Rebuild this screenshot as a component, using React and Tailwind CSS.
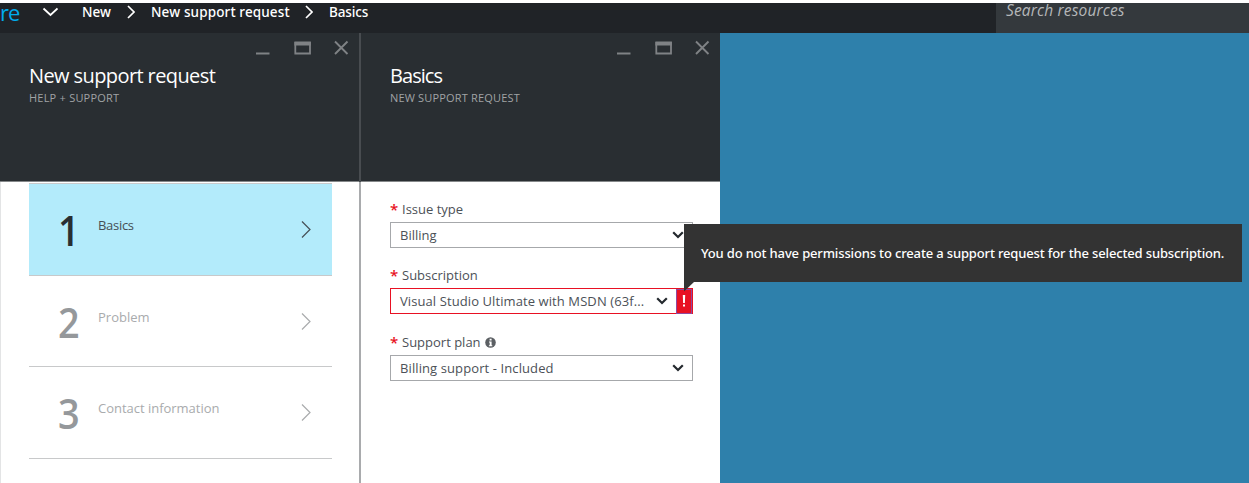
const crumbs = [
  { label: 'New', cls: 'w-[30px] tracking-[0px]' },
  { label: 'New support request', cls: 'w-[139px] tracking-[0.13px]' },
  { label: 'Basics', cls: 'w-10 tracking-[-0.15px]' },
];

const steps = [
  { n: '1', label: 'Basics', active: true, row: 'h-[93px]', spacing: 'tracking-[-0.3px]' },
  { n: '2', label: 'Problem', row: 'h-[91px]', spacing: 'tracking-[0px]' },
  { n: '3', label: 'Contact information', row: 'h-[92px]', spacing: 'tracking-[-0.02px]' },
];

function WindowControls() {
  return (
    <svg className="absolute top-[7px] right-[9px]" width="95" height="16" viewBox="0 0 95 16" fill="none" stroke="#7f8285">
      <path d="M1 13.500h13.500" strokeWidth="2" />
      <path d="M40.300 13.500V3h14.700v10.500z" strokeWidth="1.800" />
      <path d="M39.400 3.500h16.500" strokeWidth="4" />
      <path d="M80 1.500l12.500 12.500M92.500 1.500L80 14" strokeWidth="1.900" />
    </svg>
  );
}

function BladeHeader({ title, subtitle, titleCls, subCls }) {
  return (
    <div className="relative h-[149px] shrink-0 border-b border-[#85888a] bg-[#292e32] pt-[29px] pl-[29px] whitespace-nowrap">
      <WindowControls />
      <h2 className={`text-[20px] leading-7 text-white ${titleCls}`}>{title}</h2>
      <p className={`text-[11px] leading-[15px] text-[#a0a3a5] ${subCls}`}>{subtitle}</p>
    </div>
  );
}

function Required({ children, cls }) {
  return (
    <div className="flex h-5 items-center text-[13px] leading-5 text-[#4c5157]">
      <span className="w-3 text-[15px] font-semibold text-[#e81123]">*</span>
      <span className={`whitespace-nowrap ${cls}`}>{children}</span>
    </div>
  );
}

function Caret() {
  return (
    <svg width="12" height="8" viewBox="0 0 12 8" fill="none" stroke="#24292e" strokeWidth="2.200">
      <path d="M1.200 1.200L6 6l4.800-4.800" />
    </svg>
  );
}

function Select({ value, cls, invalid }) {
  return (
    <div className={`flex h-[26px] items-center border text-[13px] text-[#4c5157] ${invalid ? 'border-[#e81123]' : 'border-[#a6a8ab] pr-2'}`}>
      <span className={`ml-[9px] grow leading-5 whitespace-nowrap ${cls}`}>{value}</span>
      <Caret />
      {invalid && (
        <span className="ml-2 flex h-[25px] w-4 items-center justify-center border border-[#8f4aa0] bg-[#e81123]">
          <svg width="4" height="12" viewBox="0 0 4 12" fill="#fff">
            <path d="M.8 0h2.400L2.900 8H1.100zM1 9.500h2V11.500H1z" />
          </svg>
        </span>
      )}
    </div>
  );
}

export default function App() {
  return (
    <div className="relative flex h-[483px] w-[1249px] flex-col overflow-hidden bg-white pt-[3px] font-['Open_Sans','Noto_Sans',sans-serif]">
      <header className="flex h-[30px] shrink-0 justify-between bg-[#202327]">
        <div className="flex h-[18px] items-center text-[14px] font-medium text-white">
          <span className="w-[42px] text-[22px] leading-[18px] font-normal tracking-[-0.9px] text-[#00abec]">re</span>
          <svg width="16" height="10" viewBox="0 0 16 10" fill="none" stroke="#fff" strokeWidth="1.800">
            <path d="M1.500 1.500L8.500 8l7-6.500" />
          </svg>
          <nav className="ml-6 flex items-center font-['Noto_Sans',sans-serif] text-[13.500px]">
            {crumbs.map((c, i) => (
              <span key={c.label} className="flex items-center">
                {i > 0 && (
                  <svg className="mr-4 ml-[15px]" width="8" height="14" viewBox="0 0 8 14" fill="none" stroke="#fff" strokeWidth="1.700">
                    <path d="M1 1l6 6-6 6" />
                  </svg>
                )}
                <span className={`-mt-px leading-[18px] whitespace-nowrap ${c.cls}`}>{c.label}</span>
              </span>
            ))}
          </nav>
        </div>
        <div className="w-[253px] bg-[#34393d] pl-[10px] text-[15.500px] leading-[14px] tracking-[0.16px] text-[#b4b7b9] italic">
          Search resources
        </div>
      </header>

      <main className="flex grow bg-[#2e80ab]">
        <section className="flex w-[359px] flex-col bg-white">
          <BladeHeader title="New support request" subtitle="HELP + SUPPORT" titleCls="tracking-[-0.6px]" subCls="tracking-[0.22px]" />
          <div className="grow border-l border-[#e3e4e5] pt-px pr-[27px] pl-7">
            {steps.map((s) => (
              <div
                key={s.n}
                className={`flex border-b border-[#c8c9ca] ${s.row} ${s.active ? 'border-t bg-[#b3ebfb] text-[#454f55]' : 'text-[#a9abad]'}`}
              >
                <span className={`w-[69px] pt-[18px] pl-[29px] text-[42px] leading-[56px] font-semibold ${s.active ? 'text-[#292e32]' : 'text-[#95989b]'}`}>
                  <span className="inline-block origin-left scale-x-90">{s.n}</span>
                </span>
                <span className={`grow pt-[31px] text-[13px] leading-5 whitespace-nowrap ${s.spacing}`}>{s.label}</span>
                <svg className="mt-[37px] mr-[21px]" width="10" height="17" viewBox="0 0 10 17" fill="none" stroke="currentColor" strokeWidth="1.200">
                  <path d="M1 .5l8 8-8 8" />
                </svg>
              </div>
            ))}
          </div>
        </section>

        <div className="flex w-0.5 flex-col">
          <div className="h-[149px] bg-[#484c50]" />
          <div className="grow bg-[#a9abad]" />
        </div>

        <section className="flex w-[359px] flex-col bg-white">
          <BladeHeader title="Basics" subtitle="NEW SUPPORT REQUEST" titleCls="tracking-[-0.95px]" subCls="tracking-[0.17px]" />
          <div className="flex flex-col pt-[17px] pr-[27px] pl-[29px]">
            <Required cls="tracking-[0px]">Issue type</Required>
            <div className="mt-[3px]">
              <Select value="Billing" cls="tracking-[0px]" />
            </div>
            <div className="mt-[17px]">
              <Required cls="tracking-[0px]">Subscription</Required>
            </div>
            <div className="mt-[3px]">
              <Select value="Visual Studio Ultimate with MSDN (63f..." cls="tracking-[0.09px]" invalid />
            </div>
            <div className="mt-[18px] flex items-center">
              <Required cls="tracking-[0px]">Support plan</Required>
              <svg className="ml-1" width="11" height="11" viewBox="0 0 11 11">
                <circle cx="5.500" cy="5.500" r="5.300" fill="#5b5f63" />
                <path d="M4.600 1.800h2v1.600h-2zM4 4.500h2.600v3.700h.7v1H3.900v-1h.8V5.500H4z" fill="#fff" />
              </svg>
            </div>
            <div className="mt-[3px]">
              <Select value="Billing support - Included" cls="tracking-[0.1px]" />
            </div>
          </div>
        </section>
      </main>

      <div role="tooltip" className="absolute top-[224px] left-[684px] h-[58px] w-[558px] bg-[#333] pt-[19px] pl-[17px] font-['Noto_Sans',sans-serif] text-[13px] leading-5 font-medium tracking-[-0.15px] whitespace-nowrap text-white">
        You do not have permissions to create a support request for the selected subscription.
        <svg className="absolute top-[58px] left-0" width="10" height="10" viewBox="0 0 10 10" fill="#333">
          <path d="M0 0h10L0 9.500z" />
        </svg>
      </div>
    </div>
  );
}
